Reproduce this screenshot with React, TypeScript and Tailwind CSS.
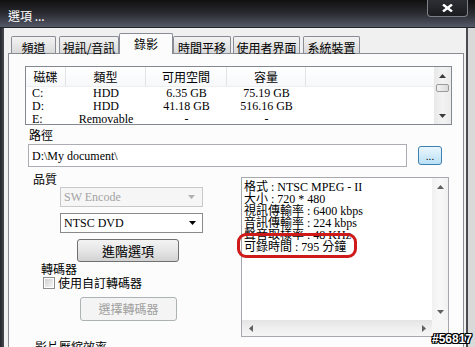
import React from "react";

type Dir = "up" | "down" | "left" | "right";

function Arrow({ dir, color = "#000" }: { dir: Dir; color?: string }) {
  const pts = {
    up: "0,4 3.5,0 7,4",
    down: "0,0 7,0 3.5,4",
    left: "4,0 4,7 0,3.5",
    right: "0,0 0,7 4,3.5",
  }[dir];
  const v = dir === "up" || dir === "down";
  const w = v ? 7 : 4;
  const h = v ? 4 : 7;
  return (
    <svg width={w} height={h} viewBox={`0 0 ${w} ${h}`} className="block">
      <polygon points={pts} fill={color} />
    </svg>
  );
}

const rows = [
  ["C:", "HDD", "6.35 GB", "75.19 GB"],
  ["D:", "HDD", "41.18 GB", "516.16 GB"],
  ["E:", "Removable", "-", "-"],
];

const info = [
  "格式 : NTSC MPEG - II",
  "大小 : 720 * 480",
  "視訊傳輸率 : 6400 kbps",
  "音訊傳輸率 : 224 kbps",
  "聲音取樣率 : 48 KHz",
  "可錄時間 : 795 分鐘",
];

function Tab({ label, w, ml }: { label: string; w: string; ml: string }) {
  return (
    <div
      className={`${w} ${ml} h-[17px] mb-[1px] border border-b-0 border-[#898c95] rounded-t-[2px] bg-gradient-to-b from-[#f3f3f3] to-[#dadada] flex justify-center text-[12px] leading-[15px] pt-[3px] text-black whitespace-nowrap`}
    >
      {label}
    </div>
  );
}

export default function App() {
  return (
    <div className="relative w-[475px] h-[347px] overflow-hidden flex flex-col bg-[#2a2b30] font-['Noto_Sans_CJK_TC',sans-serif]">
      {/* Title bar */}
      <div className="h-[28px] shrink-0 flex items-start justify-between bg-gradient-to-b from-[#101010] via-[#2b2c32] to-[#545968] border-b border-[#24252a]">
        <div className="pl-[8px] pt-[8px] text-[12px] leading-[16px] text-white">選項 ...</div>
        <div className="mr-[7px] w-[41px] h-[17px] rounded-b-[4px] border border-t-0 border-[#7d8089] bg-gradient-to-b from-[#2e2f34] to-[#1b1c20] flex items-center justify-center">
          <svg width="11" height="8" viewBox="0 0 11 8">
            <path d="M1 0.5 L10 7.5 M10 0.5 L1 7.5" stroke="#fff" strokeWidth="2.4" />
          </svg>
        </div>
      </div>

      <div className="flex-1 flex min-h-0">
        <div className="w-[4px] bg-gradient-to-r from-[#232429] to-[#474a54]" />
        {/* Window body */}
        <div className="w-[462px] bg-[#f0f0f0] pl-[4px] pr-[2px] pt-[5px] flex flex-col">
          {/* Tabs */}
          <div className="relative z-10 flex items-end h-[21px] pl-[3px]">
            <Tab label="頻道" w="w-[45px]" ml="ml-0" />
            <Tab label="視訊/音訊" w="w-[60px]" ml="ml-[3px]" />
            <div className="w-[54px] h-[21px] border border-b-0 border-[#898c95] rounded-t-[2px] bg-[#fcfcfc] flex justify-center text-[12px] leading-[14px] pt-[3px] text-black">
              錄影
            </div>
            <Tab label="時間平移" w="w-[58px]" ml="ml-0" />
            <Tab label="使用者界面" w="w-[67px]" ml="ml-[2px]" />
            <Tab label="系統裝置" w="w-[57px]" ml="ml-[3px]" />
          </div>

          {/* Panel */}
          <div className="flex-1 -mt-[1px] border border-[#898c95] bg-[#fcfcfc] flex flex-col">
            {/* Drive list */}
            <div className="ml-[16px] mt-[12px] w-[427px] h-[59px] shrink-0 border border-[#828790] bg-white flex overflow-hidden">
              <div className="w-[408px] flex flex-col">
                <div className="h-[20px] shrink-0 flex border-b border-[#eeeeee] text-[12px] text-black bg-gradient-to-b from-white to-[#f7f8fa]">
                  <div className="w-[40px] border-r border-[#e3e3e3] flex items-center justify-center">磁碟</div>
                  <div className="w-[80px] border-r border-[#e3e3e3] flex items-center justify-center">類型</div>
                  <div className="w-[81px] border-r border-[#e3e3e3] flex items-center justify-center">可用空間</div>
                  <div className="w-[79px] border-r border-[#e3e3e3] flex items-center justify-center">容量</div>
                  <div className="flex-1" />
                </div>
                <div className="font-['Liberation_Serif','Noto_Sans_CJK_TC',serif] text-[12px] leading-[13px] text-black">
                  {rows.map((r) => (
                    <div key={r[0]} className="h-[13px] flex">
                      <div className="w-[40px] pl-[6px]">{r[0]}</div>
                      <div className="w-[80px] text-center">{r[1]}</div>
                      <div className="w-[81px] text-center">{r[2]}</div>
                      <div className="w-[79px] text-center">{r[3]}</div>
                    </div>
                  ))}
                </div>
              </div>
              <div className="w-[17px] flex flex-col bg-gradient-to-r from-[#e8e8e8] via-[#f3f3f3] to-[#ebebeb]">
                <div className="h-[17px] flex items-center justify-center">
                  <Arrow dir="up" color="#3c3c3c" />
                </div>
                <div className="ml-[2px] w-[13px] h-[8px] border border-[#9a9a9a] rounded-[2px] bg-gradient-to-r from-[#f2f2f2] to-[#dcdcdc]" />
                <div className="flex-1" />
                <div className="h-[17px] flex items-center justify-center">
                  <Arrow dir="down" color="#3c3c3c" />
                </div>
              </div>
            </div>

            {/* Path */}
            <div className="ml-[20px] mt-[3px] h-[14px] text-[12px] leading-[14px] text-black">路徑</div>
            <div className="ml-[19px] mt-[2px] flex items-center">
              <div className="w-[379px] h-[23px] border border-[#abadb3] bg-white pl-[3px] flex items-center font-['Liberation_Serif',serif] text-[12px] text-black">
                D:\My document\
              </div>
              <div className="ml-[11px] w-[24px] h-[19px] rounded-[3px] border border-[#3c7fb1] bg-gradient-to-b from-[#eaf6fd] to-[#b9e0f7] flex items-center justify-center text-[10px] leading-[10px] text-black">
                ...
              </div>
            </div>

            {/* Lower area */}
            <div className="flex">
              <div className="w-[232px] flex flex-col text-[12px] text-black">
                <div className="ml-[24px] mt-[5px] h-[14px] leading-[14px]">品質</div>
                <div className="ml-[51px] mt-[1px] w-[143px] h-[20px] border border-[#c9c9c9] bg-[#f6f6f6] flex items-center justify-between pl-[3px] pr-[7px] font-['Liberation_Serif',serif] text-[#a3a3a3]">
                  <span>SW Encode</span>
                  <Arrow dir="down" color="#b0b0b0" />
                </div>
                <div className="ml-[51px] mt-[6px] w-[143px] h-[20px] border border-[#8a8a8a] bg-white flex items-center justify-between pl-[3px] pr-[6px] font-['Liberation_Serif',serif] text-black">
                  <span>NTSC DVD</span>
                  <Arrow dir="down" color="#000" />
                </div>
                <div className="ml-[68px] mt-[6px] w-[102px] h-[23px] rounded-[3px] border border-[#707070] bg-gradient-to-b from-[#f3f3f3] via-[#e6e6e6] to-[#d2d2d2] flex items-center justify-center text-[13px]">
                  進階選項
                </div>
                <div className="ml-[32px] h-[14px] leading-[14px]">轉碼器</div>
                <div className="ml-[34px] h-[14px] flex items-center">
                  <div className="w-[12px] h-[12px] border border-[#8f8f8f] bg-white p-[1px]">
                    <div className="w-full h-full bg-gradient-to-br from-[#d0d0d0] to-[#f6f6f6]" />
                  </div>
                  <span className="ml-[3px] leading-[14px]">使用自訂轉碼器</span>
                </div>
                <div className="ml-[71px] mt-[7px] w-[97px] h-[24px] rounded-[3px] border border-[#adb2b5] bg-[#f4f4f4] flex items-center justify-center text-[#a0a0a0]">
                  選擇轉碼器
                </div>
                <div className="ml-[26px] mt-[19px] h-[14px] leading-[14px] whitespace-nowrap">影片壓縮效率</div>
              </div>

              {/* Info box */}
              <div className="relative mt-[10px] w-[208px] h-[160px] shrink-0">
                <div className="w-full h-full border border-[#a6a8ae] bg-white grid grid-cols-[190px_16px] grid-rows-[142px_16px]">
                  <div className="pl-[2px] pt-[3px] font-['Liberation_Serif','Noto_Sans_CJK_TC',serif] text-[12px] leading-[12px] text-black whitespace-nowrap overflow-hidden">
                    {info.map((t) => (
                      <div key={t} className="h-[12px]">{t}</div>
                    ))}
                  </div>
                  <div className="flex flex-col bg-gradient-to-r from-[#f1f1f1] via-[#f8f8f8] to-[#f1f1f1]">
                    <div className="h-[17px] flex items-center justify-center">
                      <Arrow dir="up" color="#606060" />
                    </div>
                    <div className="flex-1" />
                    <div className="h-[17px] flex items-center justify-center">
                      <Arrow dir="down" color="#606060" />
                    </div>
                  </div>
                  <div className="flex items-center justify-between bg-gradient-to-b from-[#e4e4e4] via-[#efefef] to-[#f5f5f5]">
                    <div className="w-[17px] flex justify-center">
                      <Arrow dir="left" color="#606060" />
                    </div>
                    <div className="w-[17px] flex justify-center">
                      <Arrow dir="right" color="#606060" />
                    </div>
                  </div>
                  <div className="bg-[#f6f6f6]" />
                </div>
                <div className="absolute left-[-4px] top-[56px] w-[120px] h-[25px] border-[3px] border-[#cf1a1a] rounded-[9px]" />
              </div>
            </div>
          </div>
        </div>
        <div className="w-[2px] bg-[#4a4b50]" />
        <div className="flex-1 bg-[#d9d9d9]" />
      </div>

      {/* Watermark */}
      <div className="absolute right-[3px] bottom-[2px] font-['Liberation_Sans',sans-serif] font-bold text-[12px] leading-[12px] text-white [text-shadow:1px_0_0_#000,-1px_0_0_#000,0_1px_0_#000,0_-1px_0_#000,1px_1px_0_#000,-1px_-1px_0_#000,1px_-1px_0_#000,-1px_1px_0_#000]">
        #56817
      </div>
    </div>
  );
}
